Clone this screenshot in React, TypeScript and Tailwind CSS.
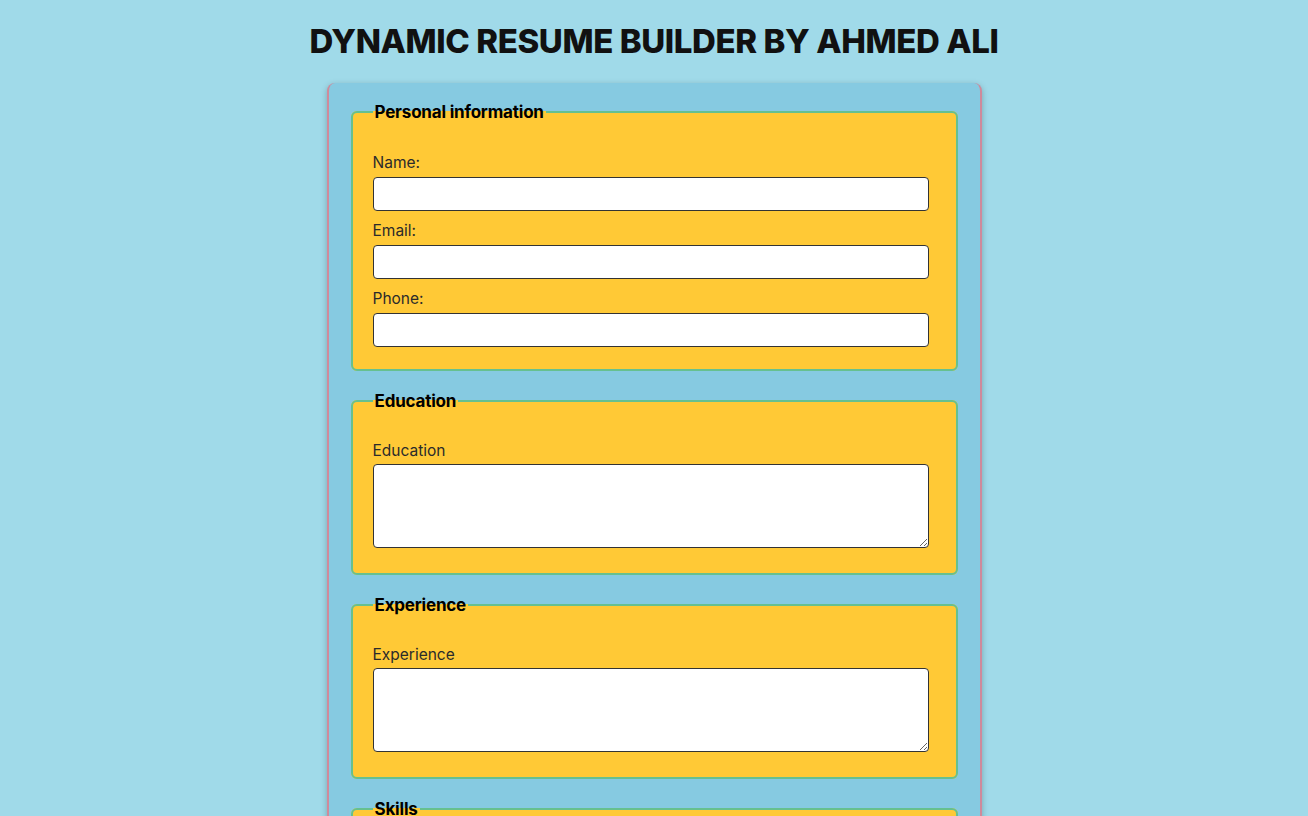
import React from 'react';

const font = { fontFamily: 'Inter, "Noto Sans", sans-serif' };

const Field: React.FC<{ label: string; area?: boolean }> = ({ label, area }) => (
  <div className={area ? 'mt-[9px]' : 'mt-[10px]'}>
    <label className={`block text-[15.5px] leading-[20px] text-[#2b2b2b] ${area ? 'mb-[3px]' : 'mb-[4px]'}`}>{label}</label>
    {area ? (
      <textarea className="block w-[556px] h-[84px] mb-[3px] bg-white border border-[#333] rounded-[4px] resize-y" />
    ) : (
      <input className="block w-[556px] h-[34px] bg-white border border-[#333] rounded-[4px]" />
    )}
  </div>
);

const Section: React.FC<{ title: string; children: React.ReactNode; last?: boolean }> = ({ title, children, last }) => (
  <fieldset className={`border-2 border-[#66c08f] rounded-[6px] bg-[#ffc936] pl-[20px] pr-[26px] pb-[22px] ${last ? '' : 'mb-[21px]'}`}>
    <legend className="px-[2px] text-[17px] font-bold text-black leading-[18px] tracking-[-0.2px]">{title}</legend>
    <div className="pt-[22px]">{children}</div>
  </fieldset>
);

export default function App() {
  return (
    <div style={font} className="min-h-screen bg-[#a0dae9] pt-[22px] pb-10">
      <h1 className="text-center text-[33px] font-extrabold tracking-[-0.4px] text-[#111] leading-[38px]">
        DYNAMIC RESUME BUILDER BY AHMED ALI
      </h1>
      <div className="mx-auto mt-[23px] w-[655px] bg-[#86cae1] rounded-[8px] border-x-2 border-[#cf8a9b] shadow-[0_2px_6px_rgba(0,0,0,0.25)] px-[22px] pt-[20px] pb-6">
        <Section title="Personal information">
          <Field label="Name:" />
          <Field label="Email:" />
          <Field label="Phone:" />
        </Section>
        <Section title="Education">
          <Field label="Education" area />
        </Section>
        <Section title="Experience">
          <Field label="Experience" area />
        </Section>
        <Section title="Skills" last>
          <Field label="Skills" area />
        </Section>
      </div>
    </div>
  );
}
